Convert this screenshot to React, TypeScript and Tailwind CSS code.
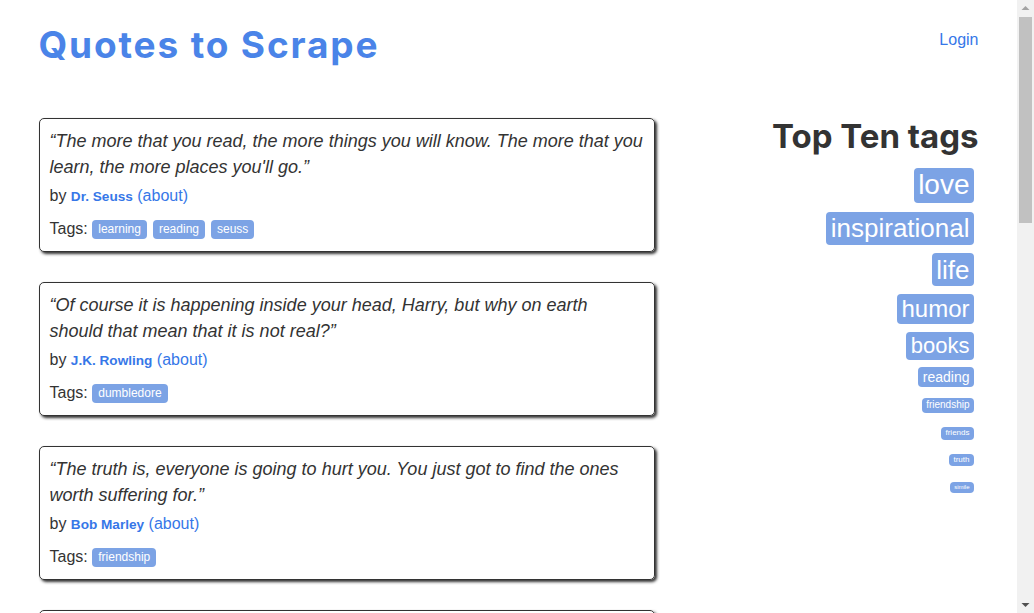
import React from "react";

type Quote = { text: string; author: string; tags: string[] };

const quotes: Quote[] = [
  {
    text: "“The more that you read, the more things you will know. The more that you learn, the more places you'll go.”",
    author: "Dr. Seuss",
    tags: ["learning", "reading", "seuss"],
  },
  {
    text: "“Of course it is happening inside your head, Harry, but why on earth should that mean that it is not real?”",
    author: "J.K. Rowling",
    tags: ["dumbledore"],
  },
  {
    text: "“The truth is, everyone is going to hurt you. You just got to find the ones worth suffering for.”",
    author: "Bob Marley",
    tags: ["friendship"],
  },
  {
    text: "“Not all of us can do great things. But we can do small things with great love.”",
    author: "Mother Teresa",
    tags: ["misattributed-to-mother-teresa", "paraphrased"],
  },
];

type TopTag = { name: string; wrap: string; chip: string };

const topTags: TopTag[] = [
  { name: "love", wrap: "mt-[14px]", chip: "h-[34.5px] text-[28px]" },
  { name: "inspirational", wrap: "mt-[9px]", chip: "h-[33px] text-[26px]" },
  { name: "life", wrap: "mt-[8.5px]", chip: "h-[33px] text-[26px]" },
  { name: "humor", wrap: "mt-[7.5px]", chip: "h-[30.5px] text-[24px]" },
  { name: "books", wrap: "mt-[7.5px]", chip: "h-[28.5px] text-[22px]" },
  { name: "reading", wrap: "mt-[7px]", chip: "h-[19.5px] text-[14px]" },
  { name: "friendship", wrap: "mt-[11.5px]", chip: "h-[14.5px] text-[10px]" },
  { name: "friends", wrap: "mt-[14.5px]", chip: "h-[12.5px] text-[8px]" },
  { name: "truth", wrap: "mt-[14px]", chip: "h-[12.5px] text-[8px]" },
  { name: "simile", wrap: "mt-[16px]", chip: "h-[10.5px] text-[6px]" },
];

function QuoteCard({ q }: { q: Quote }) {
  return (
    <div className="shrink-0 rounded-[5px] border border-[#333] p-[10px] shadow-[2px_2px_3px_#333]">
      <span className="mb-[5px] block text-[18px] italic leading-[25.7px]">{q.text}</span>
      <span className="mb-[5px] block text-[16px] leading-[22.86px]">
        by <small className="text-[13.6px] font-bold text-[#3677e8]">{q.author}</small>{" "}
        <a className="text-[#3677e8]">(about)</a>
      </span>
      <div className="flex items-center gap-[6px] pt-[3.8px] text-[16px] leading-[22.86px]">
        <span className="mr-[-1.5px]">Tags:</span>
        {q.tags.map((t) => (
          <a
            key={t}
            className="inline-block h-[19px] rounded-[4px] bg-[#7ca3e5] px-[6px] py-[3px] text-[12px] leading-[13px] text-white"
          >
            {t}
          </a>
        ))}
      </div>
    </div>
  );
}

function Scrollbar() {
  return (
    <div className="flex h-full w-[17px] shrink-0 flex-col items-center bg-[#f1f1f1]">
      <svg width="17" height="17" viewBox="0 0 17 17" className="shrink-0">
        <path d="M4.5 10 L8.5 6 L12.5 10 Z" fill="#a3a3a3" />
      </svg>
      <div className="h-[206px] w-[13px] shrink-0 bg-[#c1c1c1]" />
      <div className="flex-1" />
      <svg width="17" height="17" viewBox="0 0 17 17" className="shrink-0">
        <path d="M4.5 7 L12.5 7 L8.5 11 Z" fill="#505050" />
      </svg>
    </div>
  );
}

export default function App() {
  return (
    <div className="flex h-[613px] w-full overflow-hidden bg-white text-[#333] [font-family:'Liberation_Sans',Arial,sans-serif]">
      <div className="h-full min-w-0 flex-1 overflow-hidden">
        <div className="mx-auto w-[970px] px-[15px]">
          <header className="flex items-start justify-between pt-[24px]">
            <h1 className="text-[37px] leading-[41px] font-bold tracking-[0.05em] text-[#4a84e8] [font-family:Inter,'Noto_Sans',sans-serif]">
              Quotes to Scrape
            </h1>
            <a className="mt-[5px] text-[16px] leading-[22.86px] text-[#3677e8]">Login</a>
          </header>
          <main className="mt-[53px] flex justify-between">
            <div className="flex w-[616.67px] flex-col gap-[30px]">
              {quotes.map((q, i) => (
                <QuoteCard key={i} q={q} />
              ))}
            </div>
            <aside className="flex w-[293.33px] flex-col items-end">
              <h2 className="text-[33px] leading-[36px] font-bold text-[#333] [font-family:Inter,'Noto_Sans',sans-serif]">
                Top Ten tags
              </h2>
              {topTags.map((t) => (
                <div key={t.name} className={`mr-[4.5px] flex ${t.wrap}`}>
                  <a
                    className={`inline-flex items-center rounded-[4px] bg-[#7ca3e5] px-[4.5px] leading-none text-white ${t.chip}`}
                  >
                    {t.name}
                  </a>
                </div>
              ))}
            </aside>
          </main>
        </div>
      </div>
      <Scrollbar />
    </div>
  );
}
